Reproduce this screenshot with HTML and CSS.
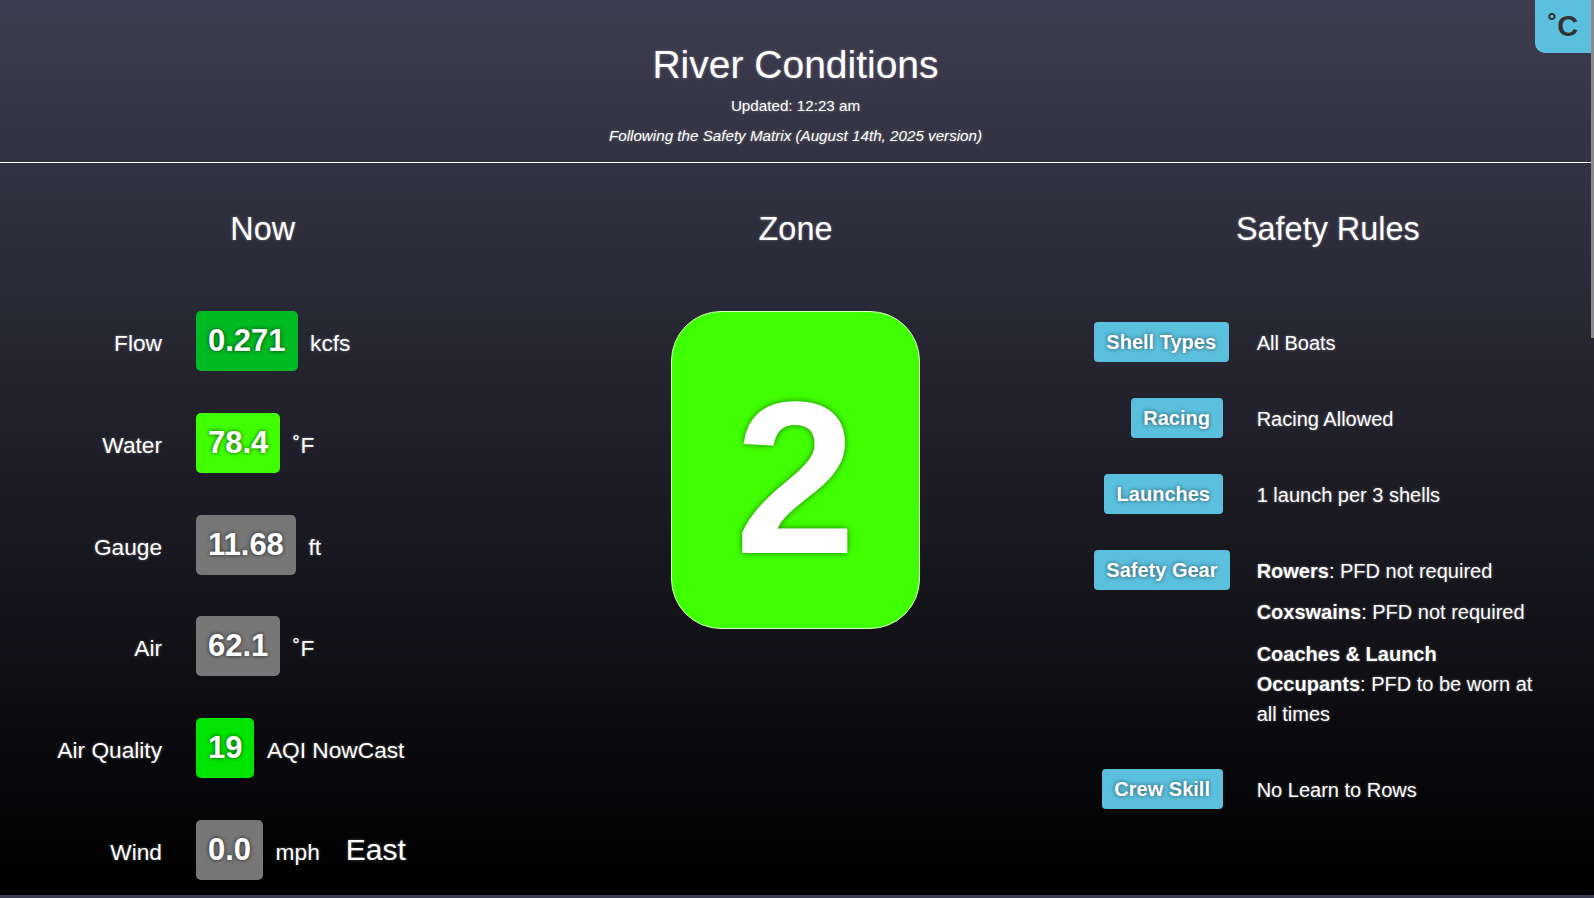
FILE: index.html
```html
<!DOCTYPE html>
<html lang="en">
<head>
<meta charset="utf-8">
<title>River Conditions</title>
<link rel="stylesheet" href="styles.css">
</head>
<body>
<div class="unit-toggle">˚C</div>
<div class="scroll-thumb"></div>
<header class="masthead">
  <h1 class="title">River Conditions</h1>
  <p class="updated">Updated: 12:23 am</p>
  <p class="matrix">Following the Safety Matrix (August 14th, 2025 version)</p>
</header>
<main class="board">
  <section class="col">
    <h2 class="col-title col-title-left">Now</h2>
    <div class="readings">
      <div class="reading"><span class="label">Flow</span><span class="value v-flow">0.271</span><span class="unit">kcfs</span></div>
      <div class="reading"><span class="label">Water</span><span class="value v-lime">78.4</span><span class="unit">˚F</span></div>
      <div class="reading"><span class="label">Gauge</span><span class="value v-gray">11.68</span><span class="unit">ft</span></div>
      <div class="reading"><span class="label">Air</span><span class="value v-gray">62.1</span><span class="unit">˚F</span></div>
      <div class="reading"><span class="label">Air Quality</span><span class="value v-aqi">19</span><span class="unit">AQI NowCast</span></div>
      <div class="reading"><span class="label">Wind</span><span class="value v-gray">0.0</span><span class="unit">mph</span><span class="dir">East</span></div>
    </div>
  </section>
  <section class="col">
    <h2 class="col-title">Zone</h2>
    <div class="zone-box">2</div>
  </section>
  <section class="col">
    <h2 class="col-title col-title-right">Safety Rules</h2>
    <div class="rule-list">
      <div class="rule">
        <div class="rule-tag"><span class="badge">Shell Types</span></div>
        <div class="rule-text"><p>All Boats</p></div>
      </div>
      <div class="rule">
        <div class="rule-tag"><span class="badge">Racing</span></div>
        <div class="rule-text"><p>Racing Allowed</p></div>
      </div>
      <div class="rule">
        <div class="rule-tag"><span class="badge">Launches</span></div>
        <div class="rule-text"><p>1 launch per 3 shells</p></div>
      </div>
      <div class="rule">
        <div class="rule-tag"><span class="badge">Safety Gear</span></div>
        <div class="rule-text">
          <p><b>Rowers</b>: PFD not required</p>
          <p><b>Coxswains</b>: PFD not required</p>
          <p><b>Coaches &amp; Launch</b> <span><b>Occupants</b>: PFD to be worn at</span> <span>all times</span></p>
        </div>
      </div>
      <div class="rule">
        <div class="rule-tag"><span class="badge">Crew Skill</span></div>
        <div class="rule-text"><p>No Learn to Rows</p></div>
      </div>
    </div>
  </section>
</main>
</body>
</html>
```

FILE: styles.css
```css
body {
  position: relative;
  margin: 0 3px 0 0;
  font-family: "Liberation Sans", Arial, Helvetica, sans-serif;
  color: #fff;
  background: linear-gradient(to bottom, #3e3d51, #000) 0 0 / 100% 895px repeat-y;
  text-shadow: 0 0 3px rgba(255, 255, 255, 0.35);
}

.scroll-thumb {
  position: fixed;
  top: 0;
  right: 0;
  width: 3px;
  height: 338px;
  background: #8a8a8a;
}

.unit-toggle {
  position: absolute;
  top: 0;
  right: 0;
  width: 56px;
  height: 53px;
  background: #5bc0de;
  border-bottom-left-radius: 10px;
  color: #333;
  font-weight: bold;
  font-size: 29px;
  line-height: 53px;
  text-align: center;
  text-shadow: none;
}

.masthead {
  text-align: center;
  padding: 42px 0 15.5px;
  border-bottom: 1px solid #fff;
}

.title {
  margin: 0;
  font-size: 39px;
  font-weight: normal;
  line-height: 46px;
}

.updated {
  margin: 7.8px 0 0;
  font-size: 15.2px;
  line-height: 20px;
}

.matrix {
  margin: 10.7px 0 0;
  font-size: 15.2px;
  line-height: 20px;
  font-style: italic;
}

.board {
  display: grid;
  grid-template-columns: repeat(3, 1fr);
}

.col-title {
  margin: 46px 0 0;
  font-size: 32.4px;
  font-weight: normal;
  line-height: 40px;
  text-align: center;
}

.col-title-left { padding-right: 5px; }
.col-title-right { padding-left: 4px; }

.readings {
  margin-top: 62px;
  padding-left: 33px;
  display: flex;
  flex-direction: column;
  gap: 41.8px;
}

.reading {
  display: flex;
  align-items: baseline;
}

.label {
  flex: none;
  width: 129px;
  margin-right: 34px;
  text-align: right;
  font-size: 22.7px;
}

.value {
  height: 60px;
  padding: 0 12px;
  border-radius: 5px;
  font-weight: bold;
  font-size: 31px;
  line-height: 60px;
  text-shadow: 0 0 4px rgba(0, 0, 0, 0.7);
}

.v-flow { background: #00bb22; }
.v-lime { background: #40ff00; }
.v-gray { background: #777777; }
.v-aqi { background: #00e400; }

.unit {
  margin-left: 12.5px;
  font-size: 22.7px;
}

.dir {
  margin-left: 26px;
  font-size: 30px;
}

.zone-box {
  box-sizing: border-box;
  width: 249px;
  height: 318px;
  margin: 62px auto 0;
  padding-top: 16px;
  border: 1px solid #d8ffc8;
  border-radius: 50px;
  background: #40ff00;
  display: flex;
  align-items: center;
  justify-content: center;
  font-weight: bold;
  font-size: 218px;
  line-height: 218px;
  text-shadow: 0 0 6px rgba(0, 0, 0, 0.5);
}

.rule-list {
  margin-top: 73px;
  padding-left: 33px;
  display: flex;
  flex-direction: column;
  gap: 34px;
}

.rule {
  display: flex;
  align-items: flex-start;
}

.rule-tag {
  flex: none;
  width: 129px;
  margin-right: 34px;
  text-align: right;
  white-space: nowrap;
  font-size: 20px;
  line-height: 40px;
}

.badge {
  display: inline-block;
  vertical-align: top;
  height: 40px;
  padding: 0 12.7px;
  border-radius: 4px;
  background: #5bc0de;
  font-weight: bold;
  font-size: 20px;
  line-height: 40px;
  text-shadow: 0 0 4px rgba(0, 0, 0, 0.6);
}

.rule-text {
  width: 288px;
  padding: 6px 0;
  font-size: 20px;
  line-height: 30px;
}

.rule-text p {
  margin: 0 0 11.5px;
}

.rule-text p:last-child {
  margin-bottom: 0;
}
```
